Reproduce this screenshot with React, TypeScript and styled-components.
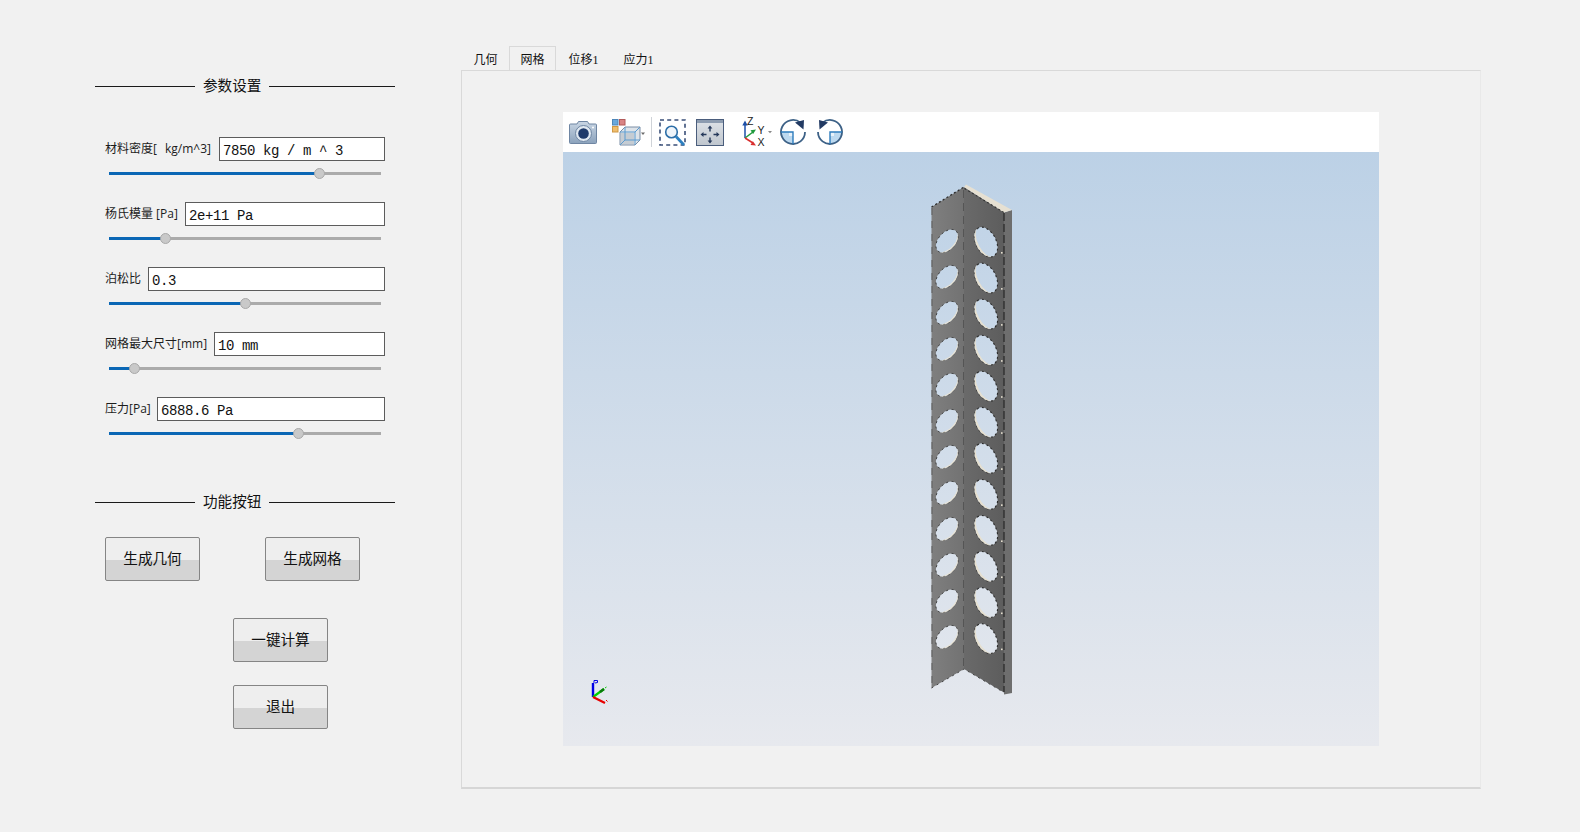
import React from "react";
import styled, { createGlobalStyle } from "styled-components";

const Global = createGlobalStyle`
  html, body { margin: 0; padding: 0; background: #f1f1f1; }
  body { font-family: "Noto Sans CJK SC", "Noto Sans", sans-serif; color: #000; }
`;

const Page = styled.div`
  width: 1580px; height: 832px; overflow: hidden;
  display: flex; align-items: flex-start;
  padding: 46px 0 0 95px; box-sizing: border-box;
`;
const Side = styled.aside`
  width: 300px; margin-right: 66px; padding-top: 30px;
  display: flex; flex-direction: column;
`;
const SectionTitle = styled.div<{ $after: number }>`
  height: 20px; margin-bottom: ${(p) => p.$after}px;
  display: flex; align-items: center; gap: 8px;
  font-size: 14.6px; line-height: 20px; white-space: nowrap; color: #111;
  &::before { content: ""; width: 100px; flex: none; height: 1px; background: #1a1a1a; }
  &::after { content: ""; flex: 1; height: 1px; background: #1a1a1a; }
`;
const TitleText = styled.span`
  padding-bottom: 3px;
`;
const ParamGroup = styled.div`
  display: flex; flex-direction: column; margin-bottom: 30px;
`;
const Param = styled.div`
  margin-bottom: 23px;
`;
const FieldRow = styled.div`
  display: flex; align-items: center; padding: 0 10px; height: 24px;
`;
const FieldLabel = styled.label<{ $w: number; $ws: number }>`
  width: ${(p) => p.$w}px; flex: none;
  font-family: "Open Sans", "Noto Sans CJK SC", sans-serif;
  font-size: 12px; line-height: 20px; white-space: nowrap; color: #1c1c1c;
  word-spacing: ${(p) => p.$ws}px;
`;
const ValueBox = styled.div`
  flex: 1; height: 24px; box-sizing: border-box;
  border: 1px solid #5c5c5c; background: #fff;
  padding-left: 3px;
  font-family: "Liberation Mono", "Noto Sans CJK SC", monospace;
  font-size: 14px; letter-spacing: -0.4px; line-height: 26px; white-space: pre; color: #111;
`;
const SliderBox = styled.div`
  position: relative; height: 12px; margin: 6px 14px 0;
  display: flex; align-items: center;
`;
const Track = styled.div`
  width: 100%; height: 3px; background: #ababab;
`;
const Fill = styled.div`
  height: 3px; background: #0a67b5;
`;
const Thumb = styled.div`
  position: absolute; top: 0.5px; width: 11px; height: 11px; margin-left: -5.5px;
  box-sizing: border-box; border-radius: 50%;
  background: #c9c9c9; border: 1px solid #a9a9a9;
`;
const ButtonRow = styled.div<{ $ml: number; $after: number }>`
  display: flex; gap: 65px;
  margin-left: ${(p) => p.$ml}px; margin-bottom: ${(p) => p.$after}px;
`;
const ActionButton = styled.button`
  width: 95px; height: 44px; padding: 0 0 3px; box-sizing: border-box;
  border: 1px solid #858585; border-radius: 2px;
  background: linear-gradient(to bottom, #eeeeee 0, #eeeeee 22px, #d4d4d4 22px, #d4d4d4 100%);
  font-family: "Noto Sans CJK SC", sans-serif; font-size: 14.6px; line-height: 20px; color: #111;
`;
const Main = styled.main`
  width: 1020px; display: flex; flex-direction: column;
`;
const TabBar = styled.div`
  display: flex; height: 24px; padding-left: 1px;
`;
const Tab = styled.div<{ $active?: boolean; $pad: number }>`
  height: 24px; box-sizing: border-box; padding: 0 ${(p) => p.$pad}px;
  font-family: "Liberation Serif", "Noto Sans CJK SC", serif; font-size: 12px; line-height: 27px; color: #111;
  border: 1px solid ${(p) => (p.$active ? "#d9d9d9" : "transparent")};
  border-bottom: 0;
`;
const Pane = styled.section`
  height: 719px; box-sizing: border-box;
  border: 1px solid #d9d9d9; border-right-color: #e9e9e9; border-bottom: 2px solid #d6d6d6;
  padding: 41px 0 0 101px;
`;
const Viewer = styled.div`
  width: 816px; height: 634px; display: flex; flex-direction: column;
`;
const Toolbar = styled.div`
  height: 40px; flex: none; background: #fff;
  display: flex; align-items: center;
`;
const ToolSlot = styled.div<{ $ml: number }>`
  margin-left: ${(p) => p.$ml}px; display: flex;
`;
const ToolSep = styled.div`
  width: 1px; height: 30px; background: #cfd3d8; margin-left: 6px;
`;
const Scene = styled.div`
  flex: 1; min-height: 0;
  background: linear-gradient(to bottom, #bcd1e6 0%, #e7e9ee 100%);
  svg { display: block; }
`;

const params = [
  { label: "材料密度[ kg/m^3]", w: 114, ws: 5, value: "7850 kg / m ^ 3", pos: 0.775 },
  { label: "杨氏模量 [Pa]", w: 80, ws: 0, value: "2e+11 Pa", pos: 0.208 },
  { label: "泊松比", w: 43, ws: 0, value: "0.3", pos: 0.5 },
  { label: "网格最大尺寸[mm]", w: 109, ws: 0, value: "10 mm", pos: 0.092 },
  { label: "压力[Pa]", w: 52, ws: 0, value: "6888.6 Pa", pos: 0.697 },
];

function SliderBar({ pos }: { pos: number }) {
  const pct = `${pos * 100}%`;
  return (
    <SliderBox>
      <Track><Fill style={{ width: pct }} /></Track>
      <Thumb style={{ left: pct }} />
    </SliderBox>
  );
}

const ellipsePath = (cx: number, cy: number, a: number, b: number, deg: number) => {
  const t = (deg * Math.PI) / 180;
  const dx = a * Math.cos(t), dy = a * Math.sin(t);
  return `M${cx - dx} ${cy - dy}A${a} ${b} ${deg} 1 0 ${cx + dx} ${cy + dy}A${a} ${b} ${deg} 1 0 ${cx - dx} ${cy - dy}Z`;
};
const crescent = (cx: number, cy: number, a: number, b: number, deg: number, k: number) => {
  const t = (deg * Math.PI) / 180;
  const dx = a * Math.cos(t), dy = a * Math.sin(t);
  return `M${cx - dx} ${cy - dy}A${a} ${b} ${deg} 0 0 ${cx + dx} ${cy + dy}A${a} ${b * k} ${deg} 0 1 ${cx - dx} ${cy - dy}Z`;
};

const holeIdx = Array.from({ length: 12 }, (_, i) => i);
const leftHole = (i: number) => ({ x: 947, y: 241 + i * 36 });
const rightHole = (i: number) => ({ x: 986, y: 242 + i * 36.05 });
const LA = 13.5, LB = 8.6, LD = -48;
const RA = 16, RB = 10, RD = 62;

function Beam() {
  const leftD =
    "M931.5 207L964 187V669L931.5 688Z" + holeIdx.map((i) => ellipsePath(leftHole(i).x, leftHole(i).y, LA, LB, LD)).join("");
  const rightD =
    "M964 187L1004 212V692.5L964 669Z" + holeIdx.map((i) => ellipsePath(rightHole(i).x, rightHole(i).y, RA, RB, RD)).join("");
  return (
    <svg width="816" height="594" viewBox="563 152 816 594">
      <defs>
        <linearGradient id="lf" x1="0" x2="1" y1="0" y2="0">
          <stop offset="0" stopColor="#7f7f7f" /><stop offset="1" stopColor="#727272" />
        </linearGradient>
        <linearGradient id="rf" x1="0" x2="1" y1="0" y2="0">
          <stop offset="0" stopColor="#6a6a6a" /><stop offset="1" stopColor="#5d5d5d" />
        </linearGradient>
      </defs>
      <path d={leftD} fill="url(#lf)" fillRule="evenodd" />
      <path d={rightD} fill="url(#rf)" fillRule="evenodd" />
      <path d="M1004 212.5L1012 210V693L1004 694.5Z" fill="#6e6e6e" />
      <path d="M964 187L966 184.5L1012 210L1004 212.5Z" fill="#e6e0d2" />
      <path d="M931.5 207L964 187" stroke="#2e2e2e" strokeWidth="1.3" strokeDasharray="2 2.4" />
      <path d="M931.5 688L964 669L1004 692.5" stroke="#444" strokeWidth="1" strokeDasharray="2 4" fill="none" />
      <path d="M964.5 188.5L1004 212.5" stroke="#333" strokeWidth="1.1" strokeDasharray="2 2.4" />
      <path d="M963.5 190V668" stroke="#555" strokeWidth="1" strokeDasharray="8 5" />
      <path d="M932 208V687" stroke="#5e5e5e" strokeWidth="1" strokeDasharray="7 6" />
      <path d="M1004 213V692" stroke="#262626" strokeWidth="1.2" strokeDasharray="8 3" />
      {holeIdx.map((i) => {
        const l = leftHole(i), r = rightHole(i);
        return (
          <g key={i}>
            <path d={ellipsePath(l.x, l.y, LA, LB, LD)} fill="none" stroke="#333" strokeWidth="1" strokeDasharray="2 3.4" />
            <path d={crescent(l.x, l.y, LA, LB, LD, 0.86)} fill="#e9e4d6" />
            <path d={ellipsePath(r.x, r.y, RA, RB, RD)} fill="none" stroke="#2a2a2a" strokeWidth="1.1" strokeDasharray="2 2.8" />
            <path d={crescent(r.x, r.y, RA, RB, RD, 0.8)} fill="#e6e0d0" />
            <rect x={1001} y={r.y + 10} width="1.6" height="1.6" fill="#e6e0d0" />
          </g>
        );
      })}
      <g transform="translate(1 0)">
        <path d="M592 697V683" stroke="#0000e6" strokeWidth="2.4" />
        <path d="M593 683V680.5h3.5V682.5L594 683" stroke="#0000e6" strokeWidth="1" fill="none" />
        <path d="M592 697L603 689" stroke="#00d000" strokeWidth="2.2" />
        <path d="M599 692L603 689" stroke="#0a7a0a" strokeWidth="2.4" />
        <path d="M604 688l1.5-1" stroke="#00d000" strokeWidth="1" />
        <path d="M592 697L604 703" stroke="#e60000" strokeWidth="2.2" />
        <path d="M605 700l1.5 1.5" stroke="#e60000" strokeWidth="1" />
      </g>
    </svg>
  );
}

const CameraIcon = () => (
  <svg width="28" height="24" viewBox="0 0 28 24">
    <defs>
      <linearGradient id="cam" x1="0" x2="0" y1="0" y2="1">
        <stop offset="0" stopColor="#c9d6e4" /><stop offset="1" stopColor="#8ba2bc" />
      </linearGradient>
    </defs>
    <path d="M1.5 4H8L9.5 1.5H18.5L20 4H26.5A1 1 0 0 1 27.5 5V22.5A1 1 0 0 1 26.5 23.5H1.5A1 1 0 0 1 .5 22.5V5A1 1 0 0 1 1.5 4Z" fill="url(#cam)" stroke="#6f86a3" />
    <circle cx="14.5" cy="13.5" r="8" fill="#dfe8f1" stroke="#6f86a3" />
    <circle cx="14.5" cy="13.5" r="5.3" fill="#1e3a6b" />
    <circle cx="24" cy="7.5" r="1" fill="#fff" />
  </svg>
);
const ViewsIcon = () => (
  <svg width="33" height="27" viewBox="0 0 33 27">
    <rect x=".5" y=".5" width="5.5" height="5.5" fill="#69a8dc" stroke="#4d86b8" />
    <rect x="7.5" y=".5" width="5.5" height="5.5" fill="#d98484" stroke="#b25a5a" />
    <rect x=".5" y="7.5" width="5.5" height="5.5" fill="#f0bd6c" stroke="#cf9845" />
    <path d="M8 13L13 8H28V21L23 26H8Z" fill="#dde3e9" stroke="#7a8ea6" />
    <rect x="9" y="14" width="13" height="11" fill="#c5ccd3" />
    <path d="M8 13H23V26M23 13L28 8M13 8V21H28M13 21L8 26" fill="none" stroke="#5a9bd0" strokeWidth="1" />
    <path d="M29 13.5h4l-2 2.5z" fill="#6b6b6b" />
  </svg>
);
const ZoomWindowIcon = () => (
  <svg width="27" height="27" viewBox="0 0 27 27">
    <rect x="1" y="1" width="25" height="25" fill="none" stroke="#3a4f78" strokeWidth="1.6" strokeDasharray="4 3.2" />
    <circle cx="12.5" cy="13" r="5.8" fill="#eef4fa" stroke="#2c6ea8" strokeWidth="1.6" />
    <path d="M17 17.5L25 26" stroke="#2c7fc0" strokeWidth="2.8" />
  </svg>
);
const FitIcon = () => (
  <svg width="28" height="27" viewBox="0 0 28 27">
    <defs>
      <linearGradient id="fit" x1="0" x2="0" y1="0" y2="1">
        <stop offset="0" stopColor="#dfe3e8" /><stop offset="1" stopColor="#bfc6ce" />
      </linearGradient>
    </defs>
    <rect x=".5" y=".5" width="27" height="26" fill="url(#fit)" stroke="#4a5d7c" />
    <rect x="1" y="1" width="26" height="3" fill="#8d9cb0" />
    <path d="M14 9v3.5M14 18.5V22M6.5 15.5H10.5M17.5 15.5H21.5" stroke="#26395a" strokeWidth="1.4" />
    <path d="M14 6.5l-2.4 3h4.8zM14 24.5l-2.4-3h4.8zM4.5 15.5l3-2.4v4.8zM23.5 15.5l-3-2.4v4.8z" fill="#26395a" />
  </svg>
);
const AxisLetter = styled.text`
  font-family: "Liberation Sans", sans-serif; font-size: 10.5px; fill: #222;
`;
const AxesIcon = () => (
  <svg width="30" height="34" viewBox="0 -3 30 34">
    <path d="M3 20V6" stroke="#1c4fa8" strokeWidth="1.5" />
    <path d="M3 2.5L.3 7.5h5.4z" fill="#1c4fa8" />
    <path d="M3 20L11 14" stroke="#1f9a3c" strokeWidth="1.5" />
    <path d="M14 11.5l-5.5.7 2.6 3.8z" fill="#1f9a3c" />
    <path d="M3 20L11 25" stroke="#d92f2f" strokeWidth="1.5" />
    <path d="M14 27.5l-5.5-.4 2.4-3.9z" fill="#d92f2f" />
    <AxisLetter x="5" y="7">Z</AxisLetter>
    <AxisLetter x="15.5" y="16">Y</AxisLetter>
    <AxisLetter x="15.5" y="27.5">X</AxisLetter>
    <path d="M26 13h4l-2 2.2z" fill="#888" />
  </svg>
);
const RotateIcon = ({ ccw }: { ccw?: boolean }) => (
  <svg width="26" height="26" viewBox="0 0 26 26">
    <g transform={ccw ? "translate(26 0) scale(-1 1)" : undefined}>
      <path d="M13 13H1A12 12 0 0 0 13 25Z" fill="#bcd9f0" />
      <rect x="9" y="13" width="4" height="4" fill="#e8f2fa" />
      <path d="M25 13A12 12 0 1 1 20.5 3.6" fill="none" stroke="#3d6186" strokeWidth="1.8" />
      <path d="M15 3.5L24 1L23.5 10.5Z" fill="#223a63" />
      <path d="M1 13H13V25" fill="none" stroke="#2d7cbd" strokeWidth="1.4" />
    </g>
  </svg>
);

export default function App() {
  return (
    <>
      <Global />
      <Page>
        <Side>
          <SectionTitle $after={41}><TitleText>参数设置</TitleText></SectionTitle>
          <ParamGroup>
            {params.map((p) => (
              <Param key={p.label}>
                <FieldRow>
                  <FieldLabel $w={p.w} $ws={p.ws}>{p.label}</FieldLabel>
                  <ValueBox>{p.value}</ValueBox>
                </FieldRow>
                <SliderBar pos={p.pos} />
              </Param>
            ))}
          </ParamGroup>
          <SectionTitle $after={25}><TitleText>功能按钮</TitleText></SectionTitle>
          <ButtonRow $ml={10} $after={37}>
            <ActionButton>生成几何</ActionButton>
            <ActionButton>生成网格</ActionButton>
          </ButtonRow>
          <ButtonRow $ml={138} $after={23}>
            <ActionButton>一键计算</ActionButton>
          </ButtonRow>
          <ButtonRow $ml={138} $after={0}>
            <ActionButton>退出</ActionButton>
          </ButtonRow>
        </Side>
        <Main>
          <TabBar>
            <Tab $pad={10.5}>几何</Tab>
            <Tab $active $pad={10.5}>网格</Tab>
            <Tab $pad={11.5}>位移1</Tab>
            <Tab $pad={11.5}>应力1</Tab>
          </TabBar>
          <Pane>
            <Viewer>
              <Toolbar>
                <ToolSlot $ml={6}><CameraIcon /></ToolSlot>
                <ToolSlot $ml={15}><ViewsIcon /></ToolSlot>
                <ToolSep />
                <ToolSlot $ml={7}><ZoomWindowIcon /></ToolSlot>
                <ToolSlot $ml={10}><FitIcon /></ToolSlot>
                <ToolSlot $ml={18}><AxesIcon /></ToolSlot>
                <ToolSlot $ml={8}><RotateIcon /></ToolSlot>
                <ToolSlot $ml={11}><RotateIcon ccw /></ToolSlot>
              </Toolbar>
              <Scene><Beam /></Scene>
            </Viewer>
          </Pane>
        </Main>
      </Page>
    </>
  );
}
